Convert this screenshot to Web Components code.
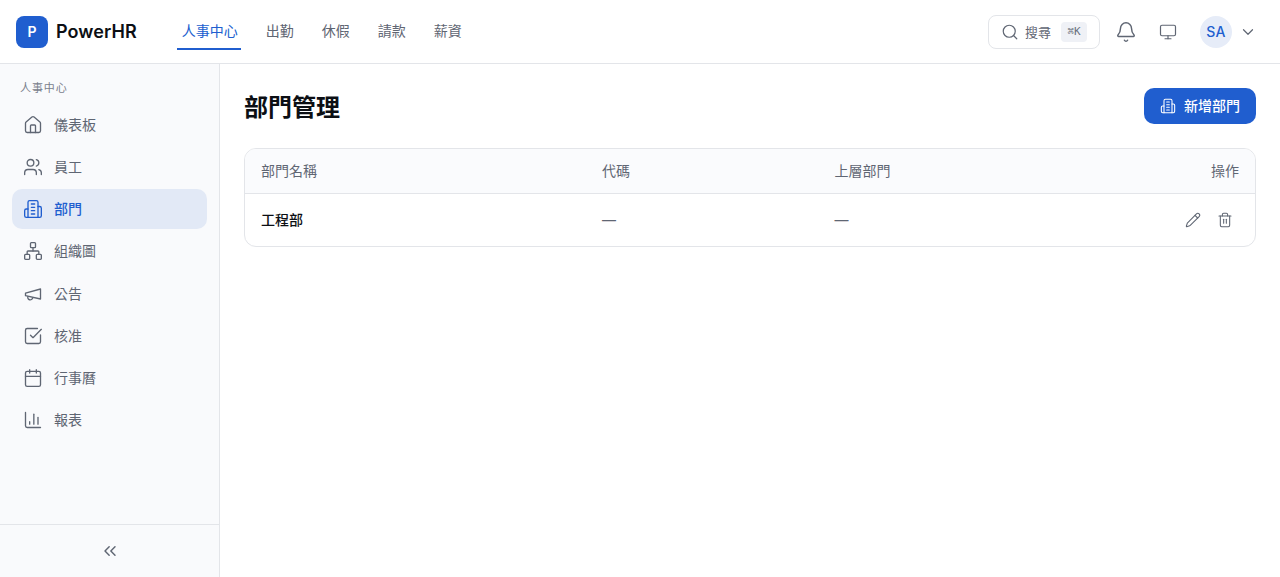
<!DOCTYPE html>
<html lang="zh-Hant">
<head>
<meta charset="utf-8">
<title>PowerHR</title>
<style>
html,body{margin:0;padding:0;height:100%;}
body{font-family:Inter,"Noto Sans CJK TC","Noto Sans",sans-serif;color:#0c0f14;background:#fff;overflow:hidden;}
</style>
</head>
<body>
<hr-app>
  <hr-topbar slot="top"></hr-topbar>
  <hr-sidebar slot="side" title="人事中心">
    <hr-side-item icon="home">儀表板</hr-side-item>
    <hr-side-item icon="users">員工</hr-side-item>
    <hr-side-item icon="building" active>部門</hr-side-item>
    <hr-side-item icon="network">組織圖</hr-side-item>
    <hr-side-item icon="megaphone">公告</hr-side-item>
    <hr-side-item icon="check">核准</hr-side-item>
    <hr-side-item icon="calendar">行事曆</hr-side-item>
    <hr-side-item icon="chart">報表</hr-side-item>
  </hr-sidebar>
  <hr-dept-page></hr-dept-page>
</hr-app>
<script>
const ICONS = {
  home: `<path d="M15 21v-8a1 1 0 0 0-1-1h-4a1 1 0 0 0-1 1v8"/><path d="M3 10a2 2 0 0 1 .709-1.528l7-5.999a2 2 0 0 1 2.582 0l7 5.999A2 2 0 0 1 21 10v9a2 2 0 0 1-2 2H5a2 2 0 0 1-2-2z"/>`,
  users: `<path d="M16 21v-2a4 4 0 0 0-4-4H6a4 4 0 0 0-4 4v2"/><circle cx="9" cy="7" r="4"/><path d="M22 21v-2a4 4 0 0 0-3-3.87"/><path d="M16 3.13a4 4 0 0 1 0 7.75"/>`,
  building: `<path d="M6 22V4a2 2 0 0 1 2-2h8a2 2 0 0 1 2 2v18Z"/><path d="M6 12H4a2 2 0 0 0-2 2v6a2 2 0 0 0 2 2h2"/><path d="M18 9h2a2 2 0 0 1 2 2v9a2 2 0 0 1-2 2h-2"/><path d="M10 6h4"/><path d="M10 10h4"/><path d="M10 14h4"/><path d="M10 18h4"/>`,
  network: `<rect x="16" y="16" width="6" height="6" rx="1"/><rect x="2" y="16" width="6" height="6" rx="1"/><rect x="9" y="2" width="6" height="6" rx="1"/><path d="M5 16v-3a1 1 0 0 1 1-1h12a1 1 0 0 1 1 1v3"/><path d="M12 12V8"/>`,
  megaphone: `<path d="m3 11 18-5v12L3 14v-3z"/><path d="M11.600 16.800a3 3 0 1 1-5.800-1.600"/>`,
  check: `<path d="M21 10.656V19a2 2 0 0 1-2 2H5a2 2 0 0 1-2-2V5a2 2 0 0 1 2-2h12.344"/><path d="m9 11 3 3L22 4"/>`,
  calendar: `<path d="M8 2v4"/><path d="M16 2v4"/><rect x="3" y="4" width="18" height="18" rx="2"/><path d="M3 10h18"/>`,
  chart: `<path d="M3 3v16a2 2 0 0 0 2 2h16"/><path d="M8 17v-3"/><path d="M13 17V5"/><path d="M18 17V9"/>`,
  search: `<circle cx="11" cy="11" r="8"/><path d="m21 21-4.300-4.300"/>`,
  bell: `<path d="M10.268 21a2 2 0 0 0 3.464 0"/><path d="M3.262 15.326A1 1 0 0 0 4 17h16a1 1 0 0 0 .74-1.673C19.410 13.956 18 12.499 18 8A6 6 0 0 0 6 8c0 4.499-1.411 5.956-2.738 7.326"/>`,
  monitor: `<rect x="2" y="3" width="20" height="14" rx="2"/><path d="M8 21h8"/><path d="M12 17v4"/>`,
  chevron: `<path d="m6 9 6 6 6-6"/>`,
  collapse: `<path d="m11 17-5-5 5-5"/><path d="m18 17-5-5 5-5"/>`,
  pencil: `<path d="M21.174 6.812a1 1 0 0 0-3.986-3.987L3.842 16.174a2 2 0 0 0-.5.83l-1.321 4.352a.5.5 0 0 0 .623.622l4.353-1.320a2 2 0 0 0 .83-.497z"/><path d="m15 5 4 4"/>`,
  trash: `<path d="M3 6h18"/><path d="M19 6v14c0 1-1 2-2 2H7c-1 0-2-1-2-2V6"/><path d="M8 6V4c0-1 1-2 2-2h4c1 0 2 1 2 2v2"/><path d="M10 11v6"/><path d="M14 11v6"/>`
};
const svg = (name, size, sw = 1.6) =>
  `<svg width="${size}" height="${size}" viewBox="0 0 24 24" fill="none" stroke="currentColor" stroke-width="${sw}" stroke-linecap="round" stroke-linejoin="round" aria-hidden="true">${ICONS[name]}</svg>`;

class HrApp extends HTMLElement {
  constructor() {
    super();
    this.attachShadow({ mode: "open" }).innerHTML = `<style>
      :host{display:grid;grid-template-columns:220px 1fr;grid-template-rows:64px 1fr;width:1280px;height:577px;}
      .top{grid-column:1 / 3;}
    </style>
    <div class="top"><slot name="top"></slot></div>
    <slot name="side"></slot>
    <slot></slot>`;
  }
}
customElements.define("hr-app", HrApp);

class HrTopbar extends HTMLElement {
  constructor() {
    super();
    const tabs = ["人事中心", "出勤", "休假", "請款", "薪資"];
    this.attachShadow({ mode: "open" }).innerHTML = `<style>
      :host{display:flex;align-items:center;height:64px;box-sizing:border-box;border-bottom:1px solid #e3e5e9;background:#fff;padding:0 23px 0 16px;}
      .logo{width:32px;height:32px;border-radius:8px;background:#205ecf;color:#fff;display:flex;align-items:center;justify-content:center;font-size:14px;font-weight:600;}
      .brand{margin-left:8px;font-size:18px;font-weight:600;letter-spacing:.1px;color:#0c0f14;}
      nav{display:flex;gap:20px;margin-left:40.300px;align-self:stretch;}
      nav a{display:flex;align-items:center;box-sizing:border-box;height:36px;margin-top:14px;padding:0 3.500px 0 4.500px;font-size:14px;line-height:20px;color:#5f6673;border-bottom:2px solid transparent;}
      nav a.on{color:#205ecf;border-bottom-color:#205ecf;}
      .right{margin-left:auto;display:flex;align-items:center;}
      .search{display:flex;align-items:center;box-sizing:border-box;width:112px;height:34px;border:1px solid #e3e5e9;border-radius:8px;padding:0 12px;color:#5f6673;font-size:13px;line-height:20px;}
      .search .ico{margin-right:6px;}
      kbd{margin-left:auto;font:11px/20px "DejaVu Sans Mono","Liberation Mono",monospace;background:#eff1f6;color:#6b7280;border-radius:4px;width:26px;text-align:center;height:20px;}
      .ico{display:flex;color:#5f6673;}
      .bell{margin-left:15px;}
      .monitor{margin-left:22px;}
      .avatar{margin-left:23px;width:32px;height:32px;border-radius:50%;background:#e6ecf8;color:#205ecf;display:flex;align-items:center;justify-content:center;font-size:14px;font-weight:500;letter-spacing:.3px;}
      .chev{margin-left:7px;}
    </style>
    <div class="logo">P</div><div class="brand">PowerHR</div>
    <nav>${tabs.map((t, i) => `<a class="${i ? "" : "on"}">${t}</a>`).join("")}</nav>
    <div class="right">
      <div class="search"><span class="ico">${svg("search", 18)}</span><span>搜尋</span><kbd>⌘K</kbd></div>
      <div class="ico bell">${svg("bell", 22)}</div>
      <div class="ico monitor">${svg("monitor", 18)}</div>
      <div class="avatar">SA</div>
      <div class="ico chev">${svg("chevron", 18)}</div>
    </div>`;
  }
}
customElements.define("hr-topbar", HrTopbar);

class HrSidebar extends HTMLElement {
  constructor() {
    super();
    this.attachShadow({ mode: "open" }).innerHTML = `<style>
      :host{display:flex;flex-direction:column;box-sizing:border-box;height:513px;background:#f9fafc;border-right:1px solid #e3e5e9;}
      .list{flex:1;padding:16px 12px 0;}
      .label{font-size:11px;line-height:16px;letter-spacing:.88px;color:#7a808c;padding-left:8px;margin-bottom:9px;}
      .items{display:flex;flex-direction:column;gap:2px;}
      .foot{height:53px;box-sizing:border-box;border-top:1px solid #e3e5e9;display:flex;align-items:center;justify-content:center;color:#5f6673;}
      .foot span{display:flex;}
    </style>
    <div class="list"><div class="label">${this.getAttribute("title")}</div><div class="items"><slot></slot></div></div>
    <div class="foot"><span>${svg("collapse", 20, 1.75)}</span></div>`;
  }
}
customElements.define("hr-sidebar", HrSidebar);

class HrSideItem extends HTMLElement {
  constructor() {
    super();
    this.attachShadow({ mode: "open" }).innerHTML = `<style>
      :host{display:flex;align-items:center;height:40.150px;border-radius:10px;padding:0 11px;font-size:14px;line-height:20px;color:#5f6673;}
      :host([active]){background:#e2e9f6;color:#205ecf;font-weight:500;}
      .i{display:flex;width:20px;margin-right:11px;}
    </style>
    <span class="i">${svg(this.getAttribute("icon"), 20)}</span><slot></slot>`;
  }
}
customElements.define("hr-side-item", HrSideItem);

class HrDeptPage extends HTMLElement {
  constructor() {
    super();
    this.attachShadow({ mode: "open" }).innerHTML = `<style>
      :host{display:block;padding:24px;box-sizing:border-box;background:#fff;}
      .head{display:flex;align-items:center;justify-content:space-between;height:36px;margin-bottom:24px;}
      h1{margin:0;padding-top:4px;font-size:24px;font-weight:700;line-height:32px;color:#0c0f14;}
      button{display:flex;align-items:center;gap:8px;height:36px;box-sizing:border-box;padding:0 16px;border:0;border-radius:10px;background:#205ecf;color:#fff;font:500 14px/20px Inter,"Noto Sans CJK TC",sans-serif;}
      .table{border:1px solid #e3e5e9;border-radius:12px;overflow:hidden;}
      .row{display:grid;grid-template-columns:341px 232.500px 1fr auto;align-items:center;padding:0 16px;font-size:14px;line-height:20px;}
      .row.h{height:44px;background:#fafbfd;border-bottom:1px solid #e3e5e9;color:#5f6673;}
      .row.b{height:52px;color:#5f6673;}
      .name{color:#0c0f14;font-weight:500;}
      .acts{display:flex;gap:16px;color:#5f6673;padding-right:6px;}
      .acts span{display:flex;}
    </style>
    <div class="head"><h1>部門管理</h1><button>${svg("building", 16)}新增部門</button></div>
    <div class="table">
      <div class="row h"><div>部門名稱</div><div>代碼</div><div>上層部門</div><div>操作</div></div>
      <div class="row b"><div class="name">工程部</div><div>—</div><div>—</div>
        <div class="acts"><span>${svg("pencil", 16)}</span><span>${svg("trash", 16)}</span></div></div>
    </div>`;
  }
}
customElements.define("hr-dept-page", HrDeptPage);
</script>
</body>
</html>
